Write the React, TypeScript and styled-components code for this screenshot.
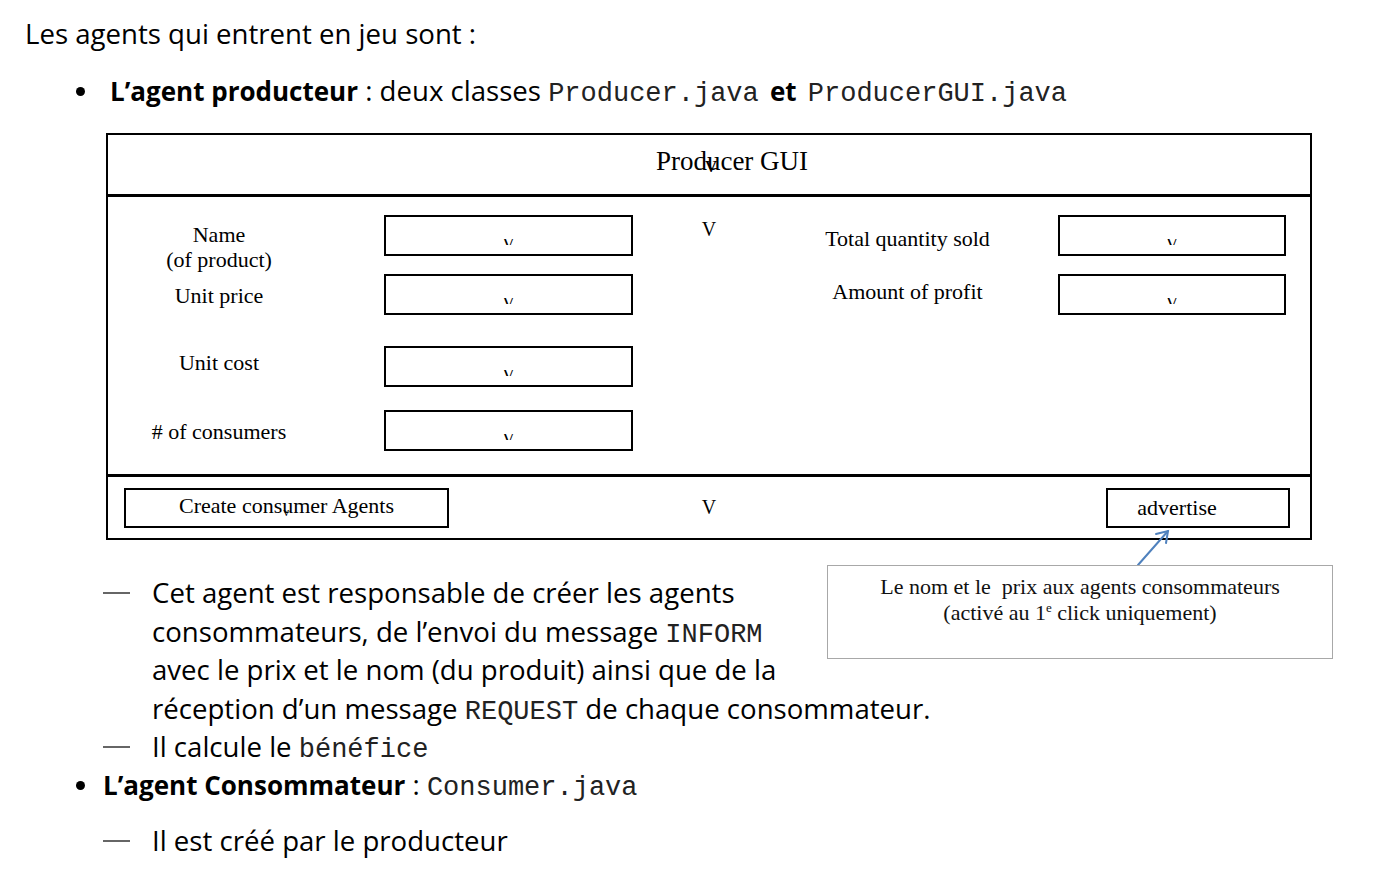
import * as React from "react";
import styled, {createGlobalStyle} from "styled-components";

const hand = `"Open Sans", "DejaVu Sans", sans-serif`
const serif = `"Liberation Serif", "Times New Roman", serif`
const mono = `"Liberation Mono", "Courier New", monospace`

const GlobalStyle = createGlobalStyle`
  html, body {
    margin: 0;
    background: #fff;
  }
  * {
    box-sizing: border-box;
  }
`

const Page = styled.div`
  width: 1374px;
  min-height: 872px;
  padding: 15px 0 0 25px;
  font-family: ${hand};
  font-size: 27.6px;
  color: #000;
`
const Intro = styled.p`
  margin: 0;
  line-height: 36px;
`
const BulletLine = styled.div<{$gap: number; $top: number}>`
  margin: ${p => p.$top}px 0 0 51px;
  line-height: 36px;
  &::before {
    content: "";
    display: inline-block;
    vertical-align: middle;
    width: 9px;
    height: 9px;
    border-radius: 50%;
    background: #000;
    margin: 0 ${p => p.$gap}px 4px 0;
  }
`
const Strong = styled.b<{$space?: number}>`
  font-weight: 700;
  font-size: 26px;
  margin: 0 ${p => p.$space || 0}px;
`
const Code = styled.span`
  font-family: ${mono};
  font-size: 27px;
  line-height: 1;
  color: #222;
`

const Figure = styled.div`
  position: relative;
  width: 1206px;
  margin: 24px 0 0 81px;
`
const Frame = styled.div`
  border: 2px solid #000;
  font-family: ${serif};
  font-size: 22px;
  line-height: 25px;
`
const Header = styled.div`
  height: 62px;
  border-bottom: 3px solid #000;
  display: flex;
  justify-content: center;
  align-items: center;
  padding: 0 0 8px 46px;
`
const Title = styled.span`
  font-size: 27px;
  line-height: 30px;
`
const Glitch = styled.span`
  position: relative;
`
const Stray = styled.span<{$dx: number; $dy: number; $size: number}>`
  position: absolute;
  left: ${p => p.$dx}px;
  top: ${p => p.$dy}px;
  font-size: ${p => p.$size}px;
  line-height: 1;
`
const Body = styled.div`
  height: 280px;
  border-bottom: 3px solid #000;
  padding-top: 18px;
  display: flex;
`
const FieldColumn = styled.div`
  display: flex;
  flex-direction: column;
`
const FieldRow = styled.div<{$top: number}>`
  display: flex;
  align-items: flex-start;
  height: 41px;
  margin-top: ${p => p.$top}px;
`
const Label = styled.div<{$width: number; $offset: number}>`
  width: ${p => p.$width}px;
  margin-top: ${p => p.$offset}px;
  text-align: center;
`
const Field = styled.div<{$width: number; $left: number}>`
  width: ${p => p.$width}px;
  margin-left: ${p => p.$left}px;
  height: 41px;
  border: 2px solid #000;
  display: flex;
  justify-content: center;
  padding-top: 22px;
`
// only the top of a clipped "V" shows inside each field
const Clipped = styled.span`
  display: block;
  height: 6px;
  overflow: hidden;
  font-size: 18px;
  line-height: 10px;
`
const MidColumn = styled.div<{$pad: number}>`
  width: 152px;
  flex: none;
  text-align: center;
  padding-top: ${p => p.$pad}px;
  font-size: 20px;
`
const Footer = styled.div`
  height: 61px;
  display: flex;
  align-items: center;
`
const FooterSide = styled.div<{$width?: number; $end?: boolean}>`
  width: ${p => (p.$width ? `${p.$width}px` : "auto")};
  flex: ${p => (p.$width ? "none" : "1")};
  display: flex;
  justify-content: ${p => (p.$end ? "flex-end" : "flex-start")};
  padding: ${p => (p.$end ? "0 20px 0 0" : "0 0 0 16px")};
`
const Button = styled.div<{$width: number; $shift: number; $lift: number}>`
  width: ${p => p.$width}px;
  height: 40px;
  border: 2px solid #000;
  display: flex;
  align-items: center;
  justify-content: center;
  padding: 0 ${p => p.$shift}px ${p => p.$lift}px 0;
  white-space: pre;
`

const Callout = styled.div`
  position: absolute;
  left: 721px;
  top: 432px;
  width: 506px;
  height: 94px;
  border: 1px solid #a8a8a8;
  padding-top: 8px;
  font-family: ${serif};
  font-size: 22px;
  line-height: 26px;
  text-align: center;
  color: #111;
  white-space: pre;
`
const Sup = styled.sup`
  font-size: 13px;
  line-height: 0;
  vertical-align: 8px;
`
const Pointer = styled.svg`
  position: absolute;
  left: 1025px;
  top: 392px;
`

const Notes = styled.div`
  margin-top: 33px;
  line-height: 38.5px;
`
const NoteItem = styled.div<{$top?: number}>`
  display: flex;
  margin-top: ${p => p.$top || 0}px;
  &::before {
    content: "";
    flex: none;
    width: 27px;
    height: 2px;
    margin: 19px 22px 0 78px;
    background: #666;
  }
`

const leftFields = [
    {label: <>Name<br/>(of product)</>, top: 0, offset: 7},
    {label: "Unit price", top: 18, offset: 9},
    {label: "Unit cost", top: 31, offset: 4},
    {label: "# of consumers", top: 23, offset: 9},
]
const rightFields = [
    {label: "Total quantity sold", top: 0, offset: 11},
    {label: "Amount of profit", top: 18, offset: 5},
]

export default function App() {
    return (
        <Page>
            <GlobalStyle/>
            <Intro>Les agents qui entrent en jeu sont :</Intro>
            <BulletLine $gap={25} $top={21}>
                <Strong>L’agent producteur</Strong> : deux classes <Code>Producer.java</Code> <Strong $space={4}>et</Strong> <Code>ProducerGUI.java</Code>
            </BulletLine>

            <Figure>
                <Frame>
                    <Header>
                        <Title>
                            Prod<Glitch>u<Stray $dx={-2} $dy={6} $size={24}>v</Stray></Glitch>cer GUI
                        </Title>
                    </Header>
                    <Body>
                        <FieldColumn>
                            {leftFields.map((f, i) => (
                                <FieldRow key={i} $top={f.top}>
                                    <Label $width={222} $offset={f.offset}>{f.label}</Label>
                                    <Field $width={249} $left={54}><Clipped>V</Clipped></Field>
                                </FieldRow>
                            ))}
                        </FieldColumn>
                        <MidColumn $pad={2}>V</MidColumn>
                        <FieldColumn>
                            {rightFields.map((f, i) => (
                                <FieldRow key={i} $top={f.top}>
                                    <Label $width={245} $offset={f.offset}>{f.label}</Label>
                                    <Field $width={228} $left={28}><Clipped>V</Clipped></Field>
                                </FieldRow>
                            ))}
                        </FieldColumn>
                    </Body>
                    <Footer>
                        <FooterSide $width={525}>
                            <Button $width={325} $shift={0} $lift={4}>
                                <span>Create cons<Glitch>u<Stray $dx={1} $dy={13} $size={12}>v</Stray></Glitch>mer Agents</span>
                            </Button>
                        </FooterSide>
                        <MidColumn $pad={0}>V</MidColumn>
                        <FooterSide $end>
                            <Button $width={184} $shift={42} $lift={0}>advertise</Button>
                        </FooterSide>
                    </Footer>
                </Frame>

                <Pointer width="45" height="45" viewBox="0 0 45 45">
                    <g stroke="#4f81bd" strokeWidth="2" fill="none" strokeLinecap="round">
                        <line x1="7" y1="40" x2="37" y2="6"/>
                        <polyline points="25,9 37,6 35,18"/>
                    </g>
                </Pointer>
                <Callout>
                    {"Le nom et le  prix aux agents consommateurs"}<br/>
                    (activé au 1<Sup>e</Sup> click uniquement)
                </Callout>
            </Figure>

            <Notes>
                <NoteItem>
                    <div>
                        Cet agent est responsable de créer les agents<br/>
                        consommateurs, de l’envoi du message <Code>INFORM</Code><br/>
                        avec le prix et le nom (du produit) ainsi que de la<br/>
                        réception d’un message <Code>REQUEST</Code> de chaque consommateur.
                    </div>
                </NoteItem>
                <NoteItem>
                    <div>Il calcule le <Code>bénéfice</Code></div>
                </NoteItem>
                <BulletLine $gap={18} $top={0}>
                    <Strong>L’agent Consommateur</Strong> : <Code>Consumer.java</Code>
                </BulletLine>
                <NoteItem $top={18}>
                    <div>Il est créé par le producteur</div>
                </NoteItem>
            </Notes>
        </Page>
    )
}
